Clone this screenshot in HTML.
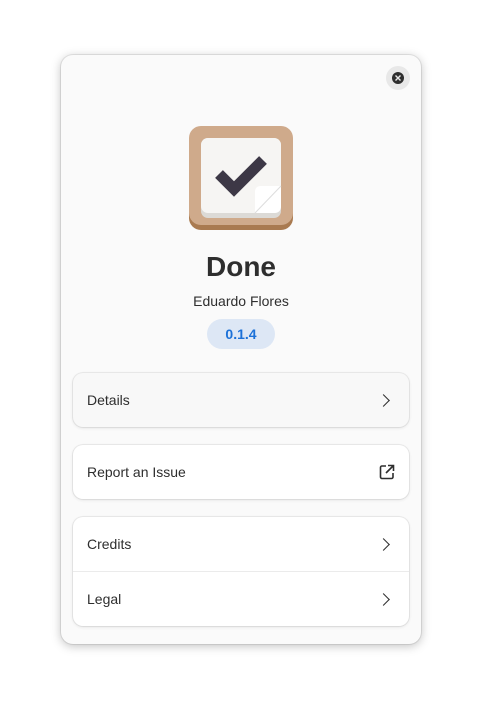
<!DOCTYPE html>
<html><head><style>
body{margin:0;width:482px;height:711px;background:#fff;font-family:"Liberation Sans","DejaVu Sans",sans-serif;position:relative;overflow:hidden}
.win{position:absolute;left:61px;top:55px;width:360px;height:589px;background:#fafafa;border-radius:12px;box-shadow:0 2px 10px rgba(0,0,0,.25),0 0 0 1px rgba(0,0,0,.08)}
.close{position:absolute;left:386px;top:66px;width:24px;height:24px;border-radius:50%;background:#e8e8e8}
.close:after{content:"";position:absolute;left:6px;top:6px;width:12px;height:12px;border-radius:50%;background:#2e2e2e}
.card{position:absolute;left:73px;width:336px;background:#fff;border-radius:10px;box-shadow:0 0 0 1px rgba(0,0,0,.06),0 1px 3px rgba(0,0,0,.1);font-size:14px;color:#2e2e2e}
.row{height:54px;line-height:54px;padding-left:14px;position:relative}
.chev{position:absolute;right:21px;top:23px;width:8px;height:8px;border-right:1.6px solid #2e2e2e;border-top:1.6px solid #2e2e2e;transform:rotate(45deg)}
</style></head><body>
<div class="win"></div>
<div class="close"><svg style="position:absolute;left:8px;top:8px;z-index:2" width="8" height="8"><path d="M1.5 1.5L6.5 6.5M6.5 1.5L1.5 6.5" stroke="#e8e8e8" stroke-width="1.4"/></svg></div>
<svg style="position:absolute;left:189px;top:126px" width="104" height="104">
<rect x="0" y="4" width="104" height="100" rx="12" fill="#a97a50"/>
<rect x="0" y="0" width="104" height="99" rx="12" fill="#cfaa8b"/>
<rect x="12" y="12" width="80" height="80" rx="7" fill="#dcdad6"/>
<rect x="12" y="12" width="80" height="75" rx="7" fill="#f6f5f3"/>
<path d="M30 48 L45 63 L74 34" stroke="#3d3846" stroke-width="11" fill="none"/>
<path d="M66 87 L66 66 Q66 60 72 60 L92 60 L92 80 Q92 87 85 87Z" fill="#fff"/>
<path d="M66 87 L92 60" stroke="#ddd" stroke-width="1"/>
</svg>
<div style="position:absolute;left:61px;width:360px;top:251px;text-align:center;font-size:28px;font-weight:bold;color:#2e2e2e">Done</div>
<div style="position:absolute;left:61px;width:360px;top:293px;text-align:center;font-size:14px;color:#2e2e2e">Eduardo Flores</div>
<div style="position:absolute;left:207px;top:319px;width:68px;height:30px;border-radius:15px;background:#dde7f5;color:#1c71d8;font-weight:bold;font-size:14px;text-align:center;line-height:30px">0.1.4</div>
<div class="card" style="top:373px;background:#f8f8f8"><div class="row">Details<div class="chev"></div></div></div>
<div class="card" style="top:445px"><div class="row">Report an Issue
<svg style="position:absolute;right:14px;top:19px" width="16" height="16" fill="none" stroke="#2e2e2e" stroke-width="1.6"><path d="M7 2H3a1.5 1.5 0 0 0-1.5 1.5v9.5A1.5 1.5 0 0 0 3 14.5h9.5A1.5 1.5 0 0 0 14 13V9"/><path d="M9 1.5h5.5V7M14.5 1.5L7 9"/></svg></div></div>
<div class="card" style="top:517px"><div class="row" style="height:54px;border-bottom:1px solid #ebebeb">Credits<div class="chev"></div></div><div class="row">Legal<div class="chev"></div></div></div>
</body></html>
